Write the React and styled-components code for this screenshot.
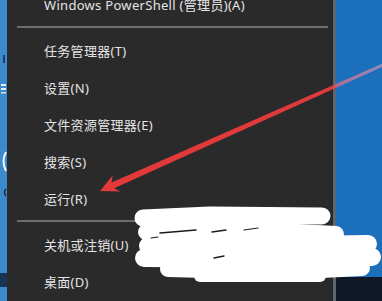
import React from "react";
import styled, { createGlobalStyle } from "styled-components";

const GlobalStyle = createGlobalStyle`
  html, body {
    margin: 0;
    padding: 0;
    background: #2b2a2b;
    overflow: hidden;
  }
`;

const Screen = styled.div`
  position: relative;
  display: flex;
  width: 382px;
  height: 301px;
  overflow: hidden;
  font-family: "Noto Sans", "Noto Sans CJK SC", sans-serif;
`;

const LeftStrip = styled.div`
  width: 7px;
  flex: none;
  background: #3a8acd;
  display: flex;
`;

const Menu = styled.div`
  width: 326px;
  flex: none;
  background: #2b2a2b;
  overflow: hidden;
`;

const List = styled.ul`
  list-style: none;
  margin: -14px 0 0 0;
  padding: 0;
`;

const Item = styled.li`
  height: 37px;
  display: flex;
  align-items: center;
  padding-left: 37px;
  font-size: 13px;
  color: #e4e4e4;
  letter-spacing: 0.3px;
  white-space: nowrap;
`;

const Separator = styled.li`
  height: 9px;
  display: flex;
  align-items: flex-start;
  padding: ${props => props.$top}px 5px 0 10px;
  box-sizing: border-box;

  &::after {
    content: "";
    flex: 1;
    height: 2px;
    background: #6e6e6e;
  }
`;

const MenuEdge = styled.div`
  width: 3px;
  flex: none;
  background: #5d6772;
`;

const Desktop = styled.div`
  flex: 1;
  background: #1c6fba;
  display: flex;
  flex-direction: column;
  justify-content: flex-end;
`;

const Taskbar = styled.div`
  height: 24px;
  background: #0e1826;
`;

const Overlay = styled.svg`
  position: absolute;
  left: 0;
  top: 0;
  width: 382px;
  height: 301px;
  pointer-events: none;
`;

const items = [
  { label: "Windows PowerShell (管理员)(A)" },
  { sep: true, top: 3 },
  { label: "任务管理器(T)" },
  { label: "设置(N)" },
  { label: "文件资源管理器(E)" },
  { label: "搜索(S)" },
  { label: "运行(R)" },
  { sep: true, top: 3 },
  { label: "关机或注销(U)" },
  { label: "桌面(D)" }
];

function StripMarks() {
  return (
    <svg width="7" height="301" viewBox="0 0 7 301">
      <rect x="3" y="55" width="2" height="8" fill="#1d3d66" />
      <rect x="1" y="84" width="5" height="2" fill="#e8eef5" />
      <rect x="1" y="88" width="5" height="2" fill="#e8eef5" />
      <rect x="1" y="92" width="5" height="1.5" fill="#cfdbe8" />
      <path d="M6 152 Q1 161 6 171" stroke="#f4f7fa" strokeWidth="2" fill="none" />
      <path d="M6 189 Q3 192 6 196" stroke="#1f2a36" strokeWidth="1.5" fill="none" />
      <rect x="0" y="273" width="7" height="14" fill="#173456" />
    </svg>
  );
}

function Arrow() {
  return (
    <>
      <defs>
        <linearGradient id="arrowFade" gradientUnits="userSpaceOnUse" x1="0" y1="0" x2="382" y2="0">
          <stop offset="0" stopColor="#e53838" />
          <stop offset="0.87" stopColor="#de3a3c" />
          <stop offset="0.885" stopColor="#c7708e" stopOpacity="0.85" />
          <stop offset="1" stopColor="#b894b6" stopOpacity="0.75" />
        </linearGradient>
      </defs>
      <polygon
        points="100,191 112.6,175.6 111.6,182.4 383,63.4 383,66.6 114.2,188.2 120.4,191.6"
        fill="url(#arrowFade)"
      />
    </>
  );
}

function Scribble() {
  return (
    <g strokeLinecap="round" strokeLinejoin="round" fill="none">
      <g stroke="#ffffff">
        <path d="M143 218 L210 215 L322 216" strokeWidth="17" />
        <path d="M146 232 L260 230 L336 234" strokeWidth="16" />
        <path d="M148 246 L300 245 L368 244" strokeWidth="18" />
        <path d="M144 258 L260 259 L372 257" strokeWidth="18" />
        <path d="M168 269 L280 272 L362 268" strokeWidth="16" />
        <path d="M200 276 L320 276" strokeWidth="12" />
      </g>
      <g stroke="#1c1c1e">
        <path d="M160 233 L196 230" strokeWidth="1.6" />
        <path d="M212 232 L226 230" strokeWidth="1.4" />
        <path d="M244 230 L258 228" strokeWidth="1.2" />
        <path d="M151 238 L158 237" strokeWidth="1.2" />
        <path d="M214 258 L224 256" strokeWidth="1.4" />
      </g>
    </g>
  );
}

export default function App() {
  return (
    <>
      <GlobalStyle />
      <Screen>
        <LeftStrip>
          <StripMarks />
        </LeftStrip>
        <Menu>
          <List>
            {items.map((it, i) =>
              it.sep ? (
                <Separator key={i} $top={it.top} />
              ) : (
                <Item key={i}>{it.label}</Item>
              )
            )}
          </List>
        </Menu>
        <MenuEdge />
        <Desktop>
          <Taskbar />
        </Desktop>
        <Overlay viewBox="0 0 382 301">
          <Arrow />
          <Scribble />
        </Overlay>
      </Screen>
    </>
  );
}
